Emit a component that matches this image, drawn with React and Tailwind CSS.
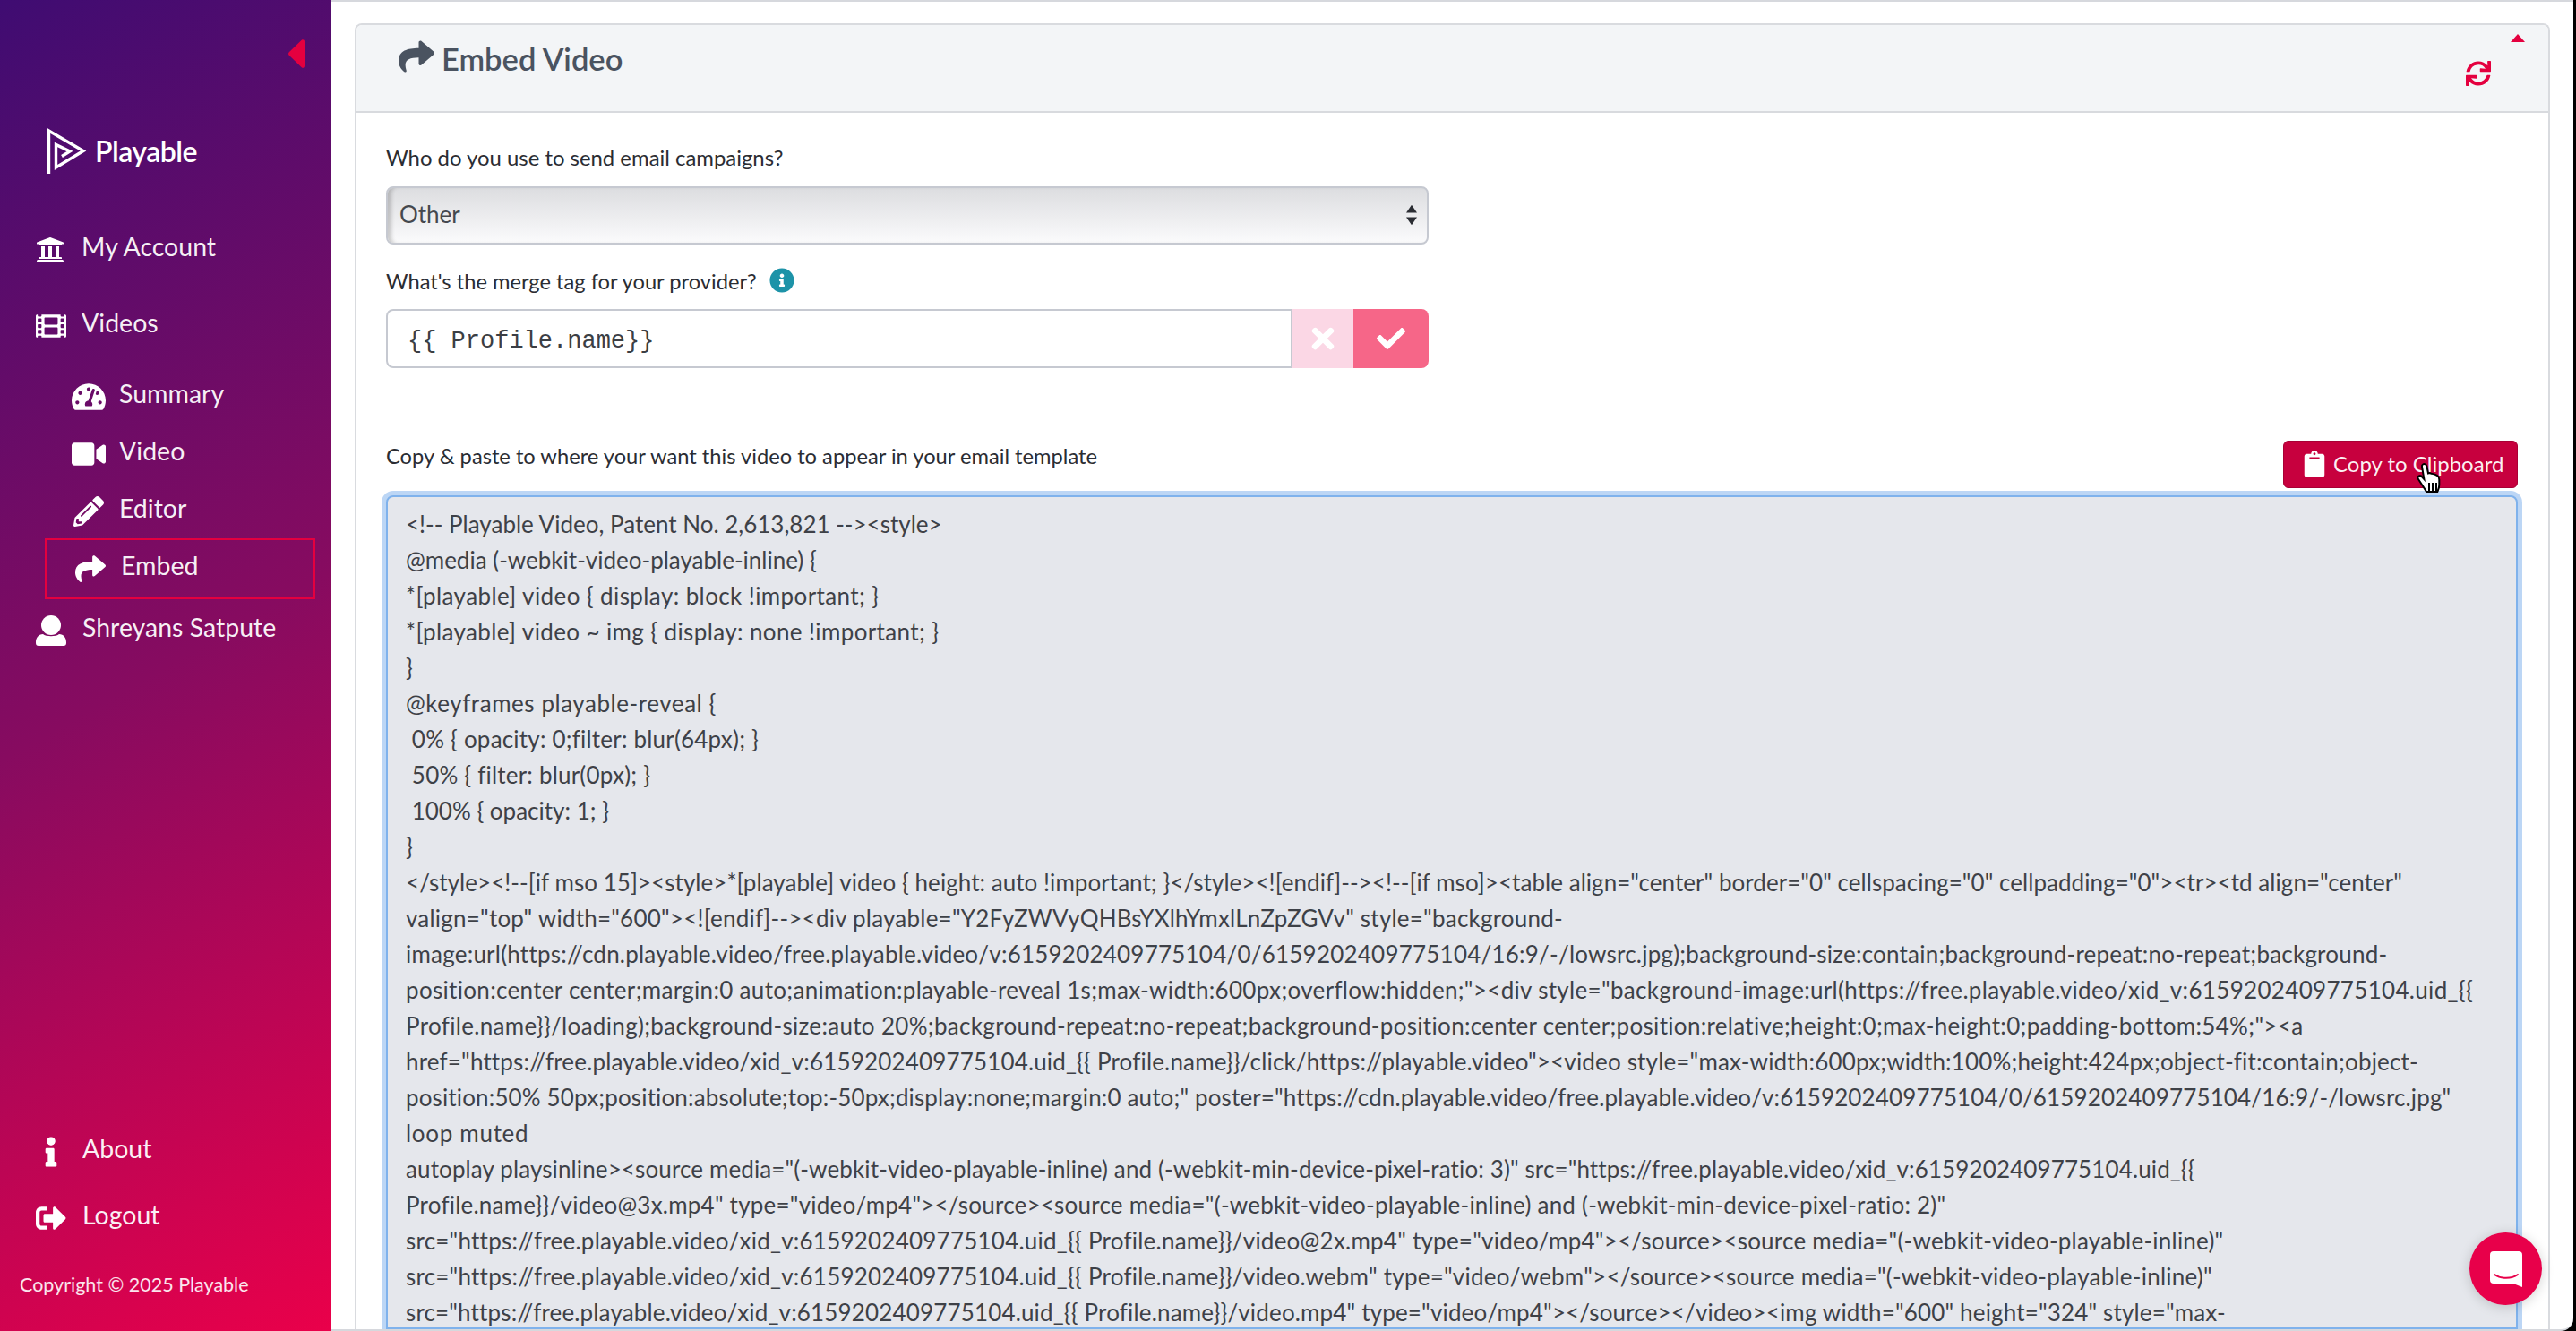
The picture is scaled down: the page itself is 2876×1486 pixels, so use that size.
import { FaUniversity, FaFilm, FaTachometerAlt, FaVideo, FaPencilAlt, FaShare, FaInfo, FaSignOutAlt, FaSync, FaTimes, FaCheck, FaClipboard, FaInfoCircle } from 'react-icons/fa'

const CODE_LINES = [
  ['<!-- Playable Video, Patent No. 2,613,821 --><style>', ''],
  ['@media (-webkit-video-playable-inline) {', ''],
  ['*[playable] video { display: block !important; }', 'tracking-[0.4px]'],
  ['*[playable] video ~ img { display: none !important; }', 'tracking-[0.38px]'],
  ['}', ''],
  ['@keyframes playable-reveal {', 'tracking-[0.55px]'],
  [' 0% { opacity: 0;filter: blur(64px); }', 'tracking-[0.2px]'],
  [' 50% { filter: blur(0px); }', 'tracking-[0.2px]'],
  [' 100% { opacity: 1; }', ''],
  ['}', ''],
  ['</style><!--[if mso 15]><style>*[playable] video { height: auto !important; }</style><![endif]--><!--[if mso]><table align="center" border="0" cellspacing="0" cellpadding="0"><tr><td align="center"', 'tracking-[0.05px]'],
  ['valign="top" width="600"><![endif]--><div playable="Y2FyZWVyQHBsYXlhYmxlLnZpZGVv" style="background-', 'tracking-[0.22px]'],
  ['image:url(https://cdn.playable.video/free.playable.video/v:6159202409775104/0/6159202409775104/16:9/-/lowsrc.jpg);background-size:contain;background-repeat:no-repeat;background-', 'tracking-[0.22px]'],
  ['position:center center;margin:0 auto;animation:playable-reveal 1s;max-width:600px;overflow:hidden;"><div style="background-image:url(https://free.playable.video/xid_v:6159202409775104.uid_{{', 'tracking-[0.32px]'],
  ['Profile.name}}/loading);background-size:auto 20%;background-repeat:no-repeat;background-position:center center;position:relative;height:0;max-height:0;padding-bottom:54%;"><a', 'tracking-[0.32px]'],
  ['href="https://free.playable.video/xid_v:6159202409775104.uid_{{ Profile.name}}/click/https://playable.video"><video style="max-width:600px;width:100%;height:424px;object-fit:contain;object-', 'tracking-[0.17px]'],
  ['position:50% 50px;position:absolute;top:-50px;display:none;margin:0 auto;" poster="https://cdn.playable.video/free.playable.video/v:6159202409775104/0/6159202409775104/16:9/-/lowsrc.jpg"', 'tracking-[0.14px]'],
  ['loop muted', 'tracking-[0.7px]'],
  ['autoplay playsinline><source media="(-webkit-video-playable-inline) and (-webkit-min-device-pixel-ratio: 3)" src="https://free.playable.video/xid_v:6159202409775104.uid_{{', 'tracking-[0.12px]'],
  ['Profile.name}}/video@3x.mp4" type="video/mp4"></source><source media="(-webkit-video-playable-inline) and (-webkit-min-device-pixel-ratio: 2)"', 'tracking-[0.22px]'],
  ['src="https://free.playable.video/xid_v:6159202409775104.uid_{{ Profile.name}}/video@2x.mp4" type="video/mp4"></source><source media="(-webkit-video-playable-inline)"', 'tracking-[0.23px]'],
  ['src="https://free.playable.video/xid_v:6159202409775104.uid_{{ Profile.name}}/video.webm" type="video/webm"></source><source media="(-webkit-video-playable-inline)"', 'tracking-[0.23px]'],
  ['src="https://free.playable.video/xid_v:6159202409775104.uid_{{ Profile.name}}/video.mp4" type="video/mp4"></source></video><img width="600" height="324" style="max-', 'tracking-[0.16px]'],
]

function UserIcon() {
  return (
    <svg width="34" height="34" viewBox="0 0 34 34" fill="white">
      <circle cx="17" cy="11" r="11" />
      <path d="M8 21c3 3 15 3 18 0 5 0 8 4 8 9v1a3 3 0 0 1-3 3H3a3 3 0 0 1-3-3v-1c0-5 3-9 8-9z" />
    </svg>
  )
}

function Logo() {
  return (
    <svg width="46" height="54" viewBox="0 0 46 54" fill="none" stroke="white" strokeWidth="3.4" strokeLinejoin="miter">
      <path d="M2.5 52V4L41 26.5 10.5 45V19.5L26 27l-9 5.5" />
    </svg>
  )
}

function HandCursor() {
  return (
    <svg width="32" height="38" viewBox="0 0 32 38">
      <path d="M8 2.5c1.8-1.2 4 0 4.4 2l1.6 8 1.5-.4 2 .6 2 .4 2.4.8 2.4 1.2c1.6 1 2 2.4 2 4.4v6c0 3-1 5-2 7.5H12l-2.5-4L3 19c-1-1.600-.6-3 .6-3.600 1.400-.8 2.800 0 3.800 1.400l2 2.200L7 5c-.2-1 .2-2 1-2.500z" fill="white" stroke="black" strokeWidth="2" />
      <path d="M15 23v9M19 23v9M23 23v9" stroke="black" strokeWidth="2" />
    </svg>
  )
}

function NavRow({ icon, label, h, iconBox = 'w-[43px]', pad = 'pl-[40px]', gap = 'gap-[8px]', cls = '' }) {
  return (
    <div className={`flex items-center ${pad} ${gap} ${h} ${cls} text-[28.5px] text-white/95 whitespace-nowrap`}>
      <span className={`flex items-center pt-[7px] ${iconBox}`}>{icon}</span>
      <span>{label}</span>
    </div>
  )
}

function Sidebar() {
  return (
    <aside className="w-[370px] shrink-0 h-full flex flex-col bg-[linear-gradient(150deg,#3f0c72_0%,#870b60_50%,#ea004a_100%)] relative">
      <div className="flex justify-end pt-[44px] pr-[30px] h-[140px]">
        <svg width="18" height="32" viewBox="0 0 18 32"><path d="M15 .5c1.500-.8 3 0 3 2v27c0 2-1.500 2.800-3 2L1 18c-1.300-1-1.300-3 0-4z" fill="#e4003f" /></svg>
      </div>
      <div className="flex items-center pl-[52px] gap-[8px] h-[58px]">
        <Logo />
        <span className="text-[32px] font-semibold text-white tracking-[-0.5px]">Playable</span>
      </div>
      <NavRow cls="mt-[47px]" h="h-[60px]" icon={<FaUniversity size={32} color="white" />} label="My Account" iconBox="w-[43px]" />
      <NavRow cls="mt-[25px]" h="h-[60px]" icon={<FaFilm size={34} color="white" />} label="Videos" />
      <NavRow cls="mt-[18px]" h="h-[62px]" pad="pl-[80px]" gap="gap-[15px]" iconBox="w-[38px]" icon={<FaTachometerAlt size={38} color="white" />} label="Summary" />
      <NavRow h="h-[66px]" pad="pl-[80px]" gap="gap-[15px]" iconBox="w-[38px]" icon={<FaVideo size={38} color="white" />} label="Video" />
      <NavRow h="h-[62px]" pad="pl-[82px]" gap="gap-[17px]" iconBox="w-[34px]" icon={<FaPencilAlt size={34} color="white" />} label="Editor" />
      <div className="ml-[50px] w-[302px] h-[68px] border-2 border-[#e4003f] flex items-center pl-[32px] gap-[17px] text-[28.5px] text-white/95 mt-[3px]">
        <FaShare size={34} color="white" />
        <span className="pb-[8px]">Embed</span>
      </div>
      <NavRow h="h-[62px]" icon={<UserIcon />} label="Shreyans Satpute" iconBox="w-[34px]" gap="gap-[18px]" />
      <div className="flex-1" />
      <NavRow h="h-[74px]" pad="pl-[50px]" gap="gap-[28px]" iconBox="w-[14px]" icon={<FaInfo size={14} color="white" className="scale-[2.4]" />} label="About" />
      <NavRow h="h-[74px]" icon={<FaSignOutAlt size={34} color="white" />} label="Logout" iconBox="w-[34px]" gap="gap-[18px]" />
      <div className="h-[41px] mt-[21px] mb-[31px] pl-[22px] flex items-center text-[21.5px] text-white/90">Copyright © 2025 Playable</div>
    </aside>
  )
}

function SelectField() {
  return (
    <div className="w-[1164px] h-[65px] rounded-[8px] border-2 border-[#c6c9d1] bg-gradient-to-b from-[#dcdde0] to-[#fbfbfc] shadow-[inset_6px_0_4px_-2px_rgba(0,0,0,0.18)] flex items-center justify-between pl-[13px] pr-[11px] pb-[2px] text-[26px] text-[#45484e]">
      <span>Other</span>
      <svg width="12" height="24" viewBox="0 0 14 26" fill="#2b2d33"><path d="M7 0l7 10H0zM7 26L0 16h14z" /></svg>
    </div>
  )
}

function MergeTagField() {
  return (
    <div className="flex w-[1164px] h-[66px]">
      <input readOnly value="{{ Profile.name}}" className="flex-1 min-w-0 rounded-l-[8px] border-2 border-[#c6c9d1] bg-white pl-[22px] pt-[7px] text-[27px] text-[#3b3e44] outline-none font-['Liberation_Mono',monospace]" />
      <div className="w-[68px] bg-[#fbd7e5] flex items-center justify-center"><FaTimes size={36} color="white" /></div>
      <div className="w-[84px] bg-[#f66688] rounded-r-[8px] flex items-center justify-center"><FaCheck size={32} color="white" /></div>
    </div>
  )
}

function CodeBox() {
  return (
    <div className="flex-1 mt-[1px] border-2 border-[#7fb2ec] rounded-t-[8px] ring-[5px] ring-[#bcd6f5] bg-[#e5e7ec] pl-[20px] pt-[10px] overflow-hidden">
      {CODE_LINES.map(([line, track], i) => (
        <div key={i} className={`h-[40px] leading-[40px] text-[26px] text-[#3e4147] whitespace-pre ${track}`}>{line}</div>
      ))}
    </div>
  )
}

export default function App() {
  return (
    <div className="w-[2876px] h-[1486px] overflow-hidden flex bg-black relative font-['Lato',sans-serif]">
      <Sidebar />
      <main className="flex-1 min-w-0 mr-[3px] h-full bg-white border-t-2 border-b-2 border-[#d6d8dd] rounded-br-[14px] pl-[26px] pr-[26px] pt-[24px] overflow-hidden">
        <section className="h-full flex flex-col border-2 border-b-0 border-[#d9dbdf] rounded-t-[8px]">
          <header className="h-[98px] shrink-0 bg-[#f3f5f7] border-b-2 border-[#d8dade] rounded-t-[6px] flex justify-between pl-[47px] pr-[25px] relative">
            <div className="flex items-start gap-[8px] pt-[15px] text-[34.5px] font-semibold text-[#4a5360]">
              <FaShare size={40} color="#4a5360" />
              <span className="-mt-[3px]">Embed Video</span>
            </div>
            <div className="flex flex-col items-end pt-[10px] pr-0">
              <svg width="16" height="9" viewBox="0 0 16 9" fill="#e4003f" className="mr-[1px]"><path d="M8 0l8 9H0z" /></svg>
              <FaSync size={28} color="#e4003f" className="mt-[21px] mr-[39px]" />
            </div>
          </header>
          <div className="flex-1 min-h-0 flex flex-col pl-[33px] pr-[34px]">
            <label className="mt-[32px] h-[36px] flex items-center text-[23.9px] text-[#2b2d33]">Who do you use to send email campaigns?</label>
            <div className="mt-[14px]"><SelectField /></div>
            <div className="mt-[24px] h-[36px] flex items-center gap-[14px] text-[23.7px] text-[#2b2d33]">
              <span>What's the merge tag for your provider?</span>
              <FaInfoCircle size={28} color="#1d93a8" className="-mt-[4px]" />
            </div>
            <div className="mt-[12px]"><MergeTagField /></div>
            <div className="mt-[83px] flex items-start justify-between h-[58px]">
              <span className="-mt-[2px] h-[36px] flex items-center text-[23.7px] text-[#2b2d33]">Copy &amp; paste to where your want this video to appear in your email template</span>
              <button className="-mt-[2px] w-[262px] h-[53px] rounded-[6px] bg-[#c7003e] border border-[#a80035] flex items-center pl-[19px] gap-[6px] pb-[1px] text-[24px] text-white/95 whitespace-nowrap">
                <FaClipboard size={30} color="white" />
                <span>Copy to Clipboard</span>
              </button>
            </div>
            <CodeBox />
          </div>
        </section>
      </main>
      <div className="absolute left-[2697px] top-[516px]"><HandCursor /></div>
      <button className="absolute left-[2757px] top-[1376px] w-[81px] h-[81px] rounded-full bg-[#e8004a] shadow-[0_2px_14px_rgba(0,0,0,0.18)] flex items-center justify-center">
        <svg width="36" height="40" viewBox="0 0 36 40">
          <path d="M4 0h28a4 4 0 0 1 4 4v36l-10-4H4a4 4 0 0 1-4-4V4a4 4 0 0 1 4-4z" fill="white" />
          <path d="M5 26c7 5 19 5 26 0" fill="none" stroke="#e8004a" strokeWidth="2" strokeLinecap="round" />
        </svg>
      </button>
    </div>
  )
}
